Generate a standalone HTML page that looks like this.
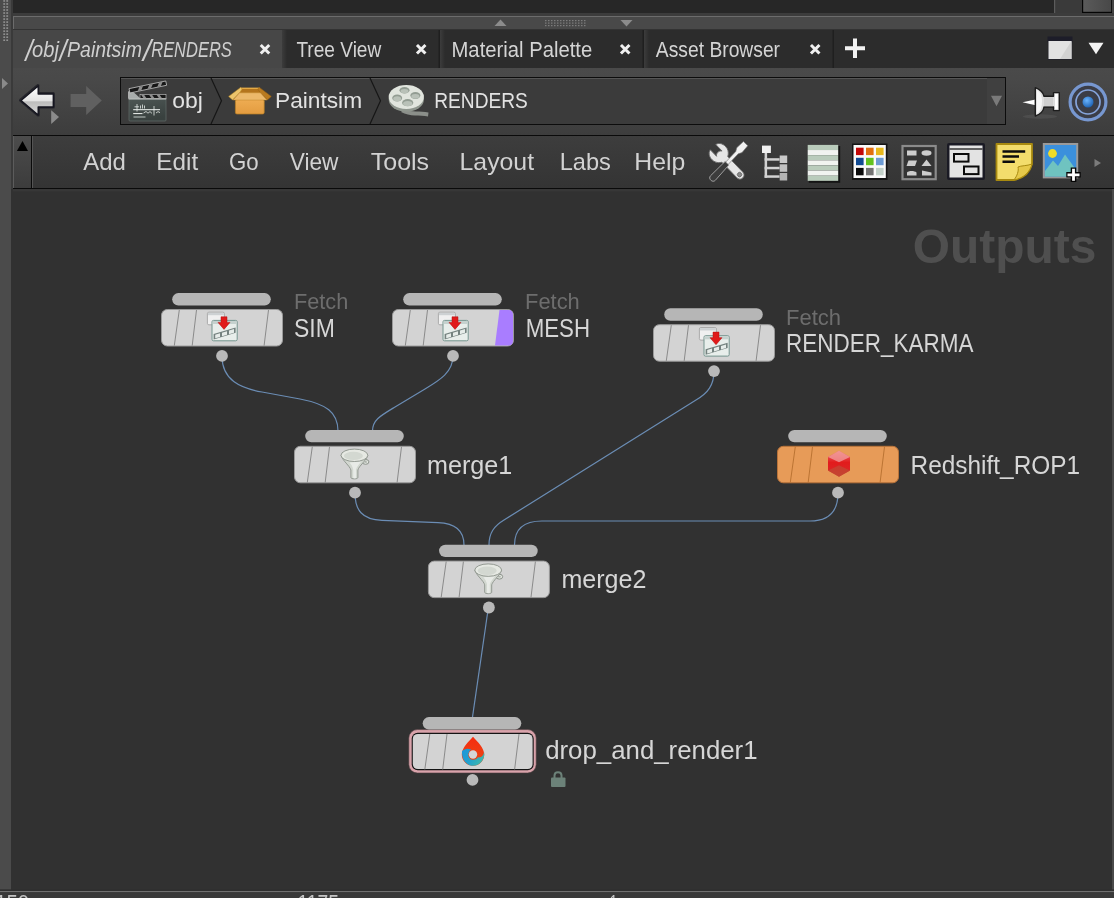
<!DOCTYPE html>
<html lang="en"><head><meta charset="utf-8"><title>Houdini Network Editor</title>
<style>
html,body{margin:0;padding:0;background:#333;}
body{width:1114px;height:898px;overflow:hidden;font-family:"Liberation Sans",sans-serif;}
svg{display:block;will-change:transform}
text{font-family:"Liberation Sans",sans-serif;}
</style></head><body>
<svg width="1114" height="898" viewBox="0 0 1114 898">
<defs>
<linearGradient id="menuG" x1="0" y1="0" x2="0" y2="1"><stop offset="0" stop-color="#3d3d3d"/><stop offset="1" stop-color="#343434"/></linearGradient>
<linearGradient id="arrG" x1="0" y1="0" x2="0" y2="1"><stop offset="0" stop-color="#ffffff"/><stop offset="0.5" stop-color="#e4e4e4"/><stop offset="0.55" stop-color="#bdbdbd"/><stop offset="1" stop-color="#d8d8d8"/></linearGradient>
<linearGradient id="tabEdge" x1="0" y1="0" x2="1" y2="0"><stop offset="0" stop-color="#3c3c3c"/><stop offset="1" stop-color="#2c2c2c"/></linearGradient>
<linearGradient id="boxG" x1="0" y1="0" x2="0" y2="1"><stop offset="0" stop-color="#eeac52"/><stop offset="1" stop-color="#e39c40"/></linearGradient>
<linearGradient id="rsG" x1="0" y1="0" x2="0" y2="1"><stop offset="0" stop-color="#ee7070"/><stop offset="0.45" stop-color="#e21c1c"/><stop offset="0.7" stop-color="#de2222"/><stop offset="1" stop-color="#c93a2a"/></linearGradient>
<linearGradient id="redG" x1="0" y1="0" x2="0" y2="1"><stop offset="0" stop-color="#f62c10"/><stop offset="1" stop-color="#e84a14"/></linearGradient>
<linearGradient id="blueG" x1="0" y1="0" x2="1" y2="0.4"><stop offset="0" stop-color="#1b96da"/><stop offset="0.55" stop-color="#24a2cc"/><stop offset="1" stop-color="#3db6ae"/></linearGradient>
<linearGradient id="clapG" x1="0" y1="0" x2="0.3" y2="1"><stop offset="0" stop-color="#4d5654"/><stop offset="1" stop-color="#39413f"/></linearGradient>
<linearGradient id="rowG" x1="0" y1="0" x2="0" y2="1"><stop offset="0" stop-color="#4a4a4a"/><stop offset="0.15" stop-color="#494949"/><stop offset="1" stop-color="#3d3d3d"/></linearGradient>
<linearGradient id="tbx" x1="0" y1="0" x2="1" y2="0"><stop offset="0" stop-color="#5a5a5a"/><stop offset="1" stop-color="#484848"/></linearGradient>
<linearGradient id="btnG" x1="0" y1="0" x2="0" y2="1"><stop offset="0" stop-color="#4c4c4c"/><stop offset="1" stop-color="#3c3c3c"/></linearGradient>
<filter id="soft" x="-20%" y="-20%" width="140%" height="140%"><feGaussianBlur stdDeviation="0.75"/></filter>
<radialGradient id="blueBall" cx="0.4" cy="0.35" r="0.7"><stop offset="0" stop-color="#6ab4ff"/><stop offset="1" stop-color="#1c5fb0"/></radialGradient>
</defs>

<rect x="0" y="0" width="1114" height="898" fill="#474747"/>
<rect x="13" y="0" width="1041" height="13" fill="#272727"/>
<rect x="13" y="13" width="1101" height="3" fill="#3c3c3c"/>
<rect x="1054" y="0" width="60" height="13" fill="#3a3a3a"/>
<rect x="1054" y="0" width="1.2" height="13" fill="#5c5c5c"/>
<rect x="1082" y="0" width="30" height="13" fill="#050505"/>
<rect x="1083.2" y="0" width="28" height="11.8" fill="url(#tbx)"/>
<rect x="1112" y="0" width="2" height="13" fill="#444"/>
<rect x="13" y="16" width="1101" height="1" fill="#6c6c6c"/>
<rect x="13" y="17" width="1" height="12" fill="#6c6c6c"/>
<rect x="14" y="17" width="1100" height="12" fill="#494949"/>
<rect x="13" y="29" width="1101" height="1" fill="#333"/>
<rect x="0" y="0" width="11" height="889" fill="#4b4b4b"/>
<rect x="11" y="0" width="2" height="889" fill="#3a3a3a"/>
<rect x="3.3" y="0.20" width="1.8" height="1.5" fill="#969696"/>
<rect x="6.3" y="0.20" width="1.8" height="1.5" fill="#969696"/>
<rect x="3.3" y="3.22" width="1.8" height="1.5" fill="#969696"/>
<rect x="6.3" y="3.22" width="1.8" height="1.5" fill="#969696"/>
<rect x="3.3" y="6.24" width="1.8" height="1.5" fill="#969696"/>
<rect x="6.3" y="6.24" width="1.8" height="1.5" fill="#969696"/>
<rect x="3.3" y="9.26" width="1.8" height="1.5" fill="#969696"/>
<rect x="6.3" y="9.26" width="1.8" height="1.5" fill="#969696"/>
<rect x="3.3" y="12.28" width="1.8" height="1.5" fill="#969696"/>
<rect x="6.3" y="12.28" width="1.8" height="1.5" fill="#969696"/>
<rect x="3.3" y="15.30" width="1.8" height="1.5" fill="#969696"/>
<rect x="6.3" y="15.30" width="1.8" height="1.5" fill="#969696"/>
<rect x="3.3" y="18.32" width="1.8" height="1.5" fill="#969696"/>
<rect x="6.3" y="18.32" width="1.8" height="1.5" fill="#969696"/>
<rect x="3.3" y="21.34" width="1.8" height="1.5" fill="#969696"/>
<rect x="6.3" y="21.34" width="1.8" height="1.5" fill="#969696"/>
<rect x="3.3" y="24.36" width="1.8" height="1.5" fill="#969696"/>
<rect x="6.3" y="24.36" width="1.8" height="1.5" fill="#969696"/>
<rect x="3.3" y="27.38" width="1.8" height="1.5" fill="#969696"/>
<rect x="6.3" y="27.38" width="1.8" height="1.5" fill="#969696"/>
<rect x="3.3" y="30.40" width="1.8" height="1.5" fill="#969696"/>
<rect x="6.3" y="30.40" width="1.8" height="1.5" fill="#969696"/>
<rect x="3.3" y="33.42" width="1.8" height="1.5" fill="#969696"/>
<rect x="6.3" y="33.42" width="1.8" height="1.5" fill="#969696"/>
<rect x="3.3" y="36.44" width="1.8" height="1.5" fill="#969696"/>
<rect x="6.3" y="36.44" width="1.8" height="1.5" fill="#969696"/>
<rect x="3.3" y="39.46" width="1.8" height="1.5" fill="#969696"/>
<rect x="6.3" y="39.46" width="1.8" height="1.5" fill="#969696"/>
<path d="M2 78 L8 83.5 L2 89 Z" fill="#8a8a8a"/>
<rect x="282" y="30" width="832" height="38" fill="#2c2c2c"/>
<rect x="282" y="30" width="5" height="38" fill="url(#tabEdge)"/>
<rect x="440" y="30" width="5" height="38" fill="url(#tabEdge)"/>
<rect x="644" y="30" width="5" height="38" fill="url(#tabEdge)"/>
<rect x="438.5" y="30" width="1.5" height="38" fill="#1f1f1f"/>
<rect x="642.5" y="30" width="1.5" height="38" fill="#1f1f1f"/>
<rect x="832.5" y="30" width="1.5" height="38" fill="#1f1f1f"/>
<path d="M494.5 26 L500.5 19.5 L506.5 26 Z" fill="#8c8c8c"/>
<path d="M620.5 20 L632.5 20 L626.5 26.5 Z" fill="#8c8c8c"/>
<rect x="545" y="20" width="1.5" height="1.2" fill="#7d7d7d"/>
<rect x="545" y="22.5" width="1.5" height="1.2" fill="#7d7d7d"/>
<rect x="545" y="25" width="1.5" height="1.2" fill="#7d7d7d"/>
<rect x="548" y="20" width="1.5" height="1.2" fill="#7d7d7d"/>
<rect x="548" y="22.5" width="1.5" height="1.2" fill="#7d7d7d"/>
<rect x="548" y="25" width="1.5" height="1.2" fill="#7d7d7d"/>
<rect x="551" y="20" width="1.5" height="1.2" fill="#7d7d7d"/>
<rect x="551" y="22.5" width="1.5" height="1.2" fill="#7d7d7d"/>
<rect x="551" y="25" width="1.5" height="1.2" fill="#7d7d7d"/>
<rect x="554" y="20" width="1.5" height="1.2" fill="#7d7d7d"/>
<rect x="554" y="22.5" width="1.5" height="1.2" fill="#7d7d7d"/>
<rect x="554" y="25" width="1.5" height="1.2" fill="#7d7d7d"/>
<rect x="557" y="20" width="1.5" height="1.2" fill="#7d7d7d"/>
<rect x="557" y="22.5" width="1.5" height="1.2" fill="#7d7d7d"/>
<rect x="557" y="25" width="1.5" height="1.2" fill="#7d7d7d"/>
<rect x="560" y="20" width="1.5" height="1.2" fill="#7d7d7d"/>
<rect x="560" y="22.5" width="1.5" height="1.2" fill="#7d7d7d"/>
<rect x="560" y="25" width="1.5" height="1.2" fill="#7d7d7d"/>
<rect x="563" y="20" width="1.5" height="1.2" fill="#7d7d7d"/>
<rect x="563" y="22.5" width="1.5" height="1.2" fill="#7d7d7d"/>
<rect x="563" y="25" width="1.5" height="1.2" fill="#7d7d7d"/>
<rect x="566" y="20" width="1.5" height="1.2" fill="#7d7d7d"/>
<rect x="566" y="22.5" width="1.5" height="1.2" fill="#7d7d7d"/>
<rect x="566" y="25" width="1.5" height="1.2" fill="#7d7d7d"/>
<rect x="569" y="20" width="1.5" height="1.2" fill="#7d7d7d"/>
<rect x="569" y="22.5" width="1.5" height="1.2" fill="#7d7d7d"/>
<rect x="569" y="25" width="1.5" height="1.2" fill="#7d7d7d"/>
<rect x="572" y="20" width="1.5" height="1.2" fill="#7d7d7d"/>
<rect x="572" y="22.5" width="1.5" height="1.2" fill="#7d7d7d"/>
<rect x="572" y="25" width="1.5" height="1.2" fill="#7d7d7d"/>
<rect x="575" y="20" width="1.5" height="1.2" fill="#7d7d7d"/>
<rect x="575" y="22.5" width="1.5" height="1.2" fill="#7d7d7d"/>
<rect x="575" y="25" width="1.5" height="1.2" fill="#7d7d7d"/>
<rect x="578" y="20" width="1.5" height="1.2" fill="#7d7d7d"/>
<rect x="578" y="22.5" width="1.5" height="1.2" fill="#7d7d7d"/>
<rect x="578" y="25" width="1.5" height="1.2" fill="#7d7d7d"/>
<rect x="581" y="20" width="1.5" height="1.2" fill="#7d7d7d"/>
<rect x="581" y="22.5" width="1.5" height="1.2" fill="#7d7d7d"/>
<rect x="581" y="25" width="1.5" height="1.2" fill="#7d7d7d"/>
<rect x="584" y="20" width="1.5" height="1.2" fill="#7d7d7d"/>
<rect x="584" y="22.5" width="1.5" height="1.2" fill="#7d7d7d"/>
<rect x="584" y="25" width="1.5" height="1.2" fill="#7d7d7d"/>
<text transform="translate(25.46,61) scale(1,1.3)" x="0" y="0" font-size="22.5" fill="#cfcfcf" font-style="italic" textLength="7.24" lengthAdjust="spacingAndGlyphs">/</text>
<text transform="translate(59.46,61) scale(1,1.3)" x="0" y="0" font-size="22.5" fill="#cfcfcf" font-style="italic" textLength="7.24" lengthAdjust="spacingAndGlyphs">/</text>
<text transform="translate(142.92,61) scale(1,1.3)" x="0" y="0" font-size="22.5" fill="#cfcfcf" font-style="italic" textLength="8.09" lengthAdjust="spacingAndGlyphs">/</text>
<text x="32.06" y="56.6" font-size="22.5" fill="#cfcfcf" textLength="26.89" lengthAdjust="spacingAndGlyphs" font-style="italic" >obj</text>
<text x="67.1" y="56.6" font-size="22.5" fill="#cfcfcf" textLength="74.78" lengthAdjust="spacingAndGlyphs" font-style="italic" >Paintsim</text>
<text x="151.24" y="56.6" font-size="22.5" fill="#cfcfcf" textLength="80.57" lengthAdjust="spacingAndGlyphs" font-style="italic" >RENDERS</text>
<path d="M260.75 44.95 L269.25 53.45 M269.25 44.95 L260.75 53.45" stroke="#f0f0f0" stroke-width="3" fill="none"/>
<text x="296.4" y="56.7" font-size="22.5" fill="#d4d4d4" textLength="84.89" lengthAdjust="spacingAndGlyphs" >Tree View</text>
<path d="M416.95 44.95 L425.45 53.45 M425.45 44.95 L416.95 53.45" stroke="#f0f0f0" stroke-width="3" fill="none"/>
<text x="451.5" y="56.7" font-size="22.5" fill="#d4d4d4" textLength="140.67" lengthAdjust="spacingAndGlyphs" >Material Palette</text>
<path d="M620.95 44.95 L629.45 53.45 M629.45 44.95 L620.95 53.45" stroke="#f0f0f0" stroke-width="3" fill="none"/>
<text x="655.86" y="56.7" font-size="22.5" fill="#d4d4d4" textLength="124.18" lengthAdjust="spacingAndGlyphs" >Asset Browser</text>
<path d="M810.95 44.95 L819.45 53.45 M819.45 44.95 L810.95 53.45" stroke="#f0f0f0" stroke-width="3" fill="none"/>
<path d="M855 38.5 V58 M845 48.2 H865" stroke="#f2f2f2" stroke-width="4" fill="none"/>
<rect x="1047.5" y="36.5" width="25" height="6" fill="#1d1d29"/>
<rect x="1047.8" y="41" width="24.4" height="18.8" fill="#24242c"/>
<rect x="1048.5" y="41" width="23" height="18" fill="#e2e2e2"/>
<path d="M1060 59 L1071.5 41 L1071.5 59 Z" fill="#d2d2d2"/>
<path d="M1088.5 42.8 L1103.5 42.8 L1096 54.2 Z" fill="#f4f4f4"/>
<rect x="13" y="68" width="1101" height="67" fill="url(#rowG)"/>
<rect x="120.5" y="77.5" width="885" height="47" fill="#3b3b3b" stroke="#0c0c0c" stroke-width="1"/>
<rect x="121" y="78" width="884" height="1" fill="#555555"/>
<rect x="987" y="78" width="18" height="46" fill="#404040"/>
<path d="M991 95.7 L1002 95.7 L996.5 106.3 Z" fill="#7a7a7a"/>
<path d="M211 78 L221.5 100.7 L211 124" stroke="#161616" stroke-width="1.2" fill="none"/>
<path d="M370 78 L380.5 100.7 L370 124" stroke="#161616" stroke-width="1.2" fill="none"/>
<text x="172.32" y="107.6" font-size="22.5" fill="#e2e2e2" textLength="30.6" lengthAdjust="spacingAndGlyphs" >obj</text>
<text x="275.0" y="107.6" font-size="22.5" fill="#e2e2e2" textLength="87.09" lengthAdjust="spacingAndGlyphs" >Paintsim</text>
<text x="434.24" y="107.6" font-size="22.5" fill="#e2e2e2" textLength="93.63" lengthAdjust="spacingAndGlyphs" >RENDERS</text>
<path d="M20.6 100.2 L37.8 85.6 L37.8 93.6 L53.3 93.6 L53.3 107 L38.2 107 L38.2 115 Z" fill="#1a1a22" stroke="#1a1a22" stroke-width="3.2" stroke-linejoin="round" opacity="0.75" filter="url(#soft)"/>
<path d="M21 100.5 L38.2 86 L38.2 94 L53.3 94 L53.3 107 L38.2 107 L38.2 115 Z" fill="url(#arrG)" stroke="#15151f" stroke-width="1.4" stroke-linejoin="round"/>
<path d="M51.2 110.2 L59 117 L51.2 124 Z" fill="#8c8c8c"/>
<path d="M101.8 100.5 L86.2 86 L86.2 94 L70.6 94 L70.6 107 L86.2 107 L86.2 115 Z" fill="#606060"/>
<rect x="13" y="135" width="1101" height="54" fill="#0a0a0a"/>
<rect x="13" y="136" width="18" height="52" fill="url(#btnG)"/>
<rect x="13" y="136" width="1" height="52" fill="#5c5c5c"/>
<rect x="32" y="136" width="1082" height="52" fill="url(#menuG)"/>
<rect x="32" y="136" width="1" height="52" fill="#545454"/>
<path d="M16.9 151 L22.5 141 L28 151 Z" fill="#000"/>
<text x="83.23" y="169.5" font-size="24" fill="#d2d2d2" textLength="42.61" lengthAdjust="spacingAndGlyphs" >Add</text>
<text x="156.32" y="169.5" font-size="24" fill="#d2d2d2" textLength="41.83" lengthAdjust="spacingAndGlyphs" >Edit</text>
<text x="229.0" y="169.5" font-size="24" fill="#d2d2d2" textLength="29.63" lengthAdjust="spacingAndGlyphs" >Go</text>
<text x="289.81" y="169.5" font-size="24" fill="#d2d2d2" textLength="48.67" lengthAdjust="spacingAndGlyphs" >View</text>
<text x="370.74" y="169.5" font-size="24" fill="#d2d2d2" textLength="58.35" lengthAdjust="spacingAndGlyphs" >Tools</text>
<text x="459.5" y="169.5" font-size="24" fill="#d2d2d2" textLength="74.58" lengthAdjust="spacingAndGlyphs" >Layout</text>
<text x="559.74" y="169.5" font-size="24" fill="#d2d2d2" textLength="51.17" lengthAdjust="spacingAndGlyphs" >Labs</text>
<text x="634.31" y="169.5" font-size="24" fill="#d2d2d2" textLength="51.02" lengthAdjust="spacingAndGlyphs" >Help</text>
<g>
<rect x="129" y="99" width="37" height="22" rx="1" fill="url(#clapG)" stroke="#5e6866" stroke-width="0.8"/>
<rect x="128.5" y="98.2" width="37.8" height="1.2" fill="#d9dcdb"/>
<rect x="140" y="94.6" width="26" height="3.8" fill="#161616" stroke="#c9c9c9" stroke-width="0.6"/>
<path d="M146.5 98.2 L144.1 94.8 L141.1 94.8 L143.5 98.2 Z" fill="#8e8e8e"/>
<path d="M154.5 98.2 L152.1 94.8 L149.1 94.8 L151.5 98.2 Z" fill="#8e8e8e"/>
<path d="M162 98.2 L159.6 94.8 L156.6 94.8 L159 98.2 Z" fill="#8e8e8e"/>
<path d="M128.6 98.4 L128.6 91.4 L132 90.8 L140.5 98.4 Z" fill="#a9adac"/>
<path d="M128.6 98.4 L128.6 91.4" stroke="#d8d8d8" stroke-width="0.7" fill="none"/>
<g transform="rotate(-11.8 128.5 91)">
<rect x="129.5" y="88.8" width="37.5" height="4.4" fill="#161616" stroke="#cfcfcf" stroke-width="0.7"/>
<path d="M137.5 93 L140.1 89 L143.7 89 L141.1 93 Z" fill="#8e8e8e"/>
<path d="M147.5 93 L150.1 89 L153.7 89 L151.1 93 Z" fill="#8e8e8e"/>
<path d="M157.5 93 L160.1 89 L163.7 89 L161.1 93 Z" fill="#8e8e8e"/>
</g>
<path d="M133.2 109.7 H160 M133.2 113.6 H142.5" stroke="#f0f4f2" stroke-width="1" fill="none"/>
<path d="M133.5 117 H145.5" stroke="#aab2af" stroke-width="1.2" fill="none"/>
<path d="M137 104 V111.5 M134.5 106.8 H139 M140.5 105.5 V108.5 M142.5 104.5 V108.5 M144.5 105.5 V108.5 M154 106 V115.5 M143.5 113 L146 111.5 L148 113.2 L150 111.6 L152 113.4 M156 113 L158 111.6 L160 112.6" stroke="#e6ebe9" stroke-width="0.8" fill="none"/>
</g>
<g>
<path d="M240.5 88 L259.4 88 L260.6 93 L239.3 93 Z" fill="#b4751d"/>
<path d="M240 87.6 L259.8 87.6 L259.8 89 L240 89 Z" fill="#e2a945"/>
<path d="M240.6 87.4 L228.6 96.4 L232.6 99.9 L239.5 92.9 L242.2 89 Z" fill="#ecc46c" stroke="#b8861e" stroke-width="0.5"/>
<path d="M259.4 87.4 L271.3 96.4 L267.4 99.9 L260.4 92.9 L257.8 89 Z" fill="#b87a20" stroke="#96600f" stroke-width="0.5"/>
<rect x="235.4" y="99.6" width="28.8" height="14.4" rx="1.6" fill="url(#boxG)" stroke="#b97f22" stroke-width="0.7"/>
<path d="M239.5 92.8 L260.4 92.8 L267 100 L233 100 Z" fill="#ecb96b" stroke="#c58d30" stroke-width="0.5" stroke-linejoin="round"/>
</g>
<g>
<path d="M404 109 C412 113 420 110.5 428.5 112.5 L428 116.5 C420 115 410 117 401 112 Z" fill="#8b8f8a"/>
<ellipse cx="406.3" cy="99.8" rx="17.6" ry="11.9" fill="#8f968e"/>
<ellipse cx="406.3" cy="97" rx="17.6" ry="11.9" fill="#e1e5de"/>
<ellipse cx="404.5" cy="90.3" rx="5" ry="3.2" fill="#929c92"/>
<ellipse cx="404.5" cy="91.1" rx="4" ry="2.2" fill="#b9c1b8"/>
<ellipse cx="397.2" cy="98" rx="5" ry="3.5" fill="#929c92"/>
<ellipse cx="397.2" cy="98.8" rx="4" ry="2.5" fill="#b9c1b8"/>
<ellipse cx="415.4" cy="95.5" rx="5" ry="3.4" fill="#929c92"/>
<ellipse cx="415.4" cy="96.3" rx="4" ry="2.4" fill="#b9c1b8"/>
<ellipse cx="407.7" cy="102.7" rx="5.6" ry="3.6" fill="#929c92"/>
<ellipse cx="407.7" cy="103.5" rx="4.6" ry="2.6" fill="#b9c1b8"/>
</g>
<g>
<ellipse cx="1040" cy="116.5" rx="17" ry="2.2" fill="#555" opacity="0.6"/>
<path d="M1022.5 102.3 L1035.5 99.4 L1035.5 105.3 Z" fill="#ffffff"/>
<path d="M1035.3 87.7 C1041 90 1043.5 94 1044 96.3 L1053.5 96.3 L1053.5 92.6 L1059.3 92.6 L1059.3 110.6 L1053.5 110.6 L1053.5 107 L1044 107 C1043.5 110.5 1041 114 1035.3 116 Z" fill="#dedede" stroke="#1d1d1d" stroke-width="1.4" stroke-linejoin="round"/>
<path d="M1037 90 C1040.5 92.5 1042 96 1042 101.5 C1042 107 1040.5 111 1037 114 Z" fill="#f6f6f6"/>
<rect x="1044" y="97.2" width="9" height="9" fill="#cfcfcf"/>
<rect x="1055" y="94" width="2.8" height="15" fill="#ffffff"/>
</g>
<g>
<g filter="url(#soft)">
<circle cx="1088" cy="102" r="19" fill="#3b3e47"/>
<circle cx="1088" cy="102" r="17.9" fill="none" stroke="#7797d0" stroke-width="3.2"/>
<circle cx="1088" cy="102" r="12" fill="none" stroke="#86a4dc" stroke-width="1.7"/>
<circle cx="1088" cy="102" r="5.5" fill="url(#blueBall)"/>
</g>
</g>
<g>
<g transform="translate(718.3,152.6) rotate(46)">
<path d="M1.5 -3.8 L-7.6 -3.8 C-6.8 -8 -2 -10.3 3 -9.2 C6.4 -8.4 8.4 -6 9.4 -4.1 L31 -4.1 C36.6 -4.1 36.6 4.1 31 4.1 L9.4 4.1 C8.4 6 6.4 8.4 3 9.2 C-2 10.3 -6.8 8 -7.6 3.8 L1.5 3.8 C-1.2 2.4 -1.2 -2.4 1.5 -3.8 Z" fill="#e6e6e6" stroke="#6a6a6a" stroke-width="0.9" stroke-linejoin="round"/>
<circle cx="30.6" cy="0" r="2.2" fill="#8a8a8a" stroke="#5a5a5a" stroke-width="0.7"/>
</g>
<g transform="translate(745.6,143.6) rotate(133.5)">
<path d="M0 -3 L9 -3.6 L12.5 -1.7 L29 -1.7 L29 1.7 L12.5 1.7 L9 3.6 L0 3 Z" fill="#f1f1f1" stroke="#777" stroke-width="0.6" stroke-linejoin="round"/>
<path d="M27 -2.6 L47.5 -3.3 C51.5 -3.3 51.5 3.3 47.5 3.3 L27 2.6 Z" fill="#3c3c3c" stroke="#a2a2a2" stroke-width="0.9" stroke-linejoin="round"/>
</g>
</g>
<g>
<rect x="762" y="145.6" width="8.9" height="7.4" fill="#f0f0f0"/>
<rect x="764.6" y="153" width="2.5" height="24.8" fill="#d2d2d2"/>
<rect x="764.6" y="158.2" width="15" height="2.5" fill="#d2d2d2"/>
<rect x="764.6" y="166.8" width="15" height="2.5" fill="#d2d2d2"/>
<rect x="764.6" y="175.3" width="15" height="2.5" fill="#d2d2d2"/>
<rect x="779.7" y="155.5" width="7.5" height="7.5" fill="#cacaca"/>
<rect x="779.7" y="164.3" width="7.5" height="7.5" fill="#c2c2c2"/>
<rect x="779.7" y="173" width="7.5" height="7.5" fill="#b4b4b4"/>
</g>
<g>
<rect x="808.8" y="146" width="31.4" height="36.8" fill="#141414"/>
<rect x="807.7" y="144.90" width="30.5" height="5.18" fill="#b9cbbb"/>
<rect x="807.7" y="150.03" width="30.5" height="5.18" fill="#f1f3f0"/>
<rect x="807.7" y="155.16" width="30.5" height="5.18" fill="#b9cbbb"/>
<rect x="807.7" y="160.29" width="30.5" height="5.18" fill="#f1f3f0"/>
<rect x="807.7" y="165.41" width="30.5" height="5.18" fill="#b9cbbb"/>
<rect x="807.7" y="170.54" width="30.5" height="5.18" fill="#f1f3f0"/>
<rect x="807.7" y="175.67" width="30.5" height="5.18" fill="#b9cbbb"/>
</g>
<g>
<rect x="852" y="143.5" width="35.5" height="36.5" fill="#141414"/>
<rect x="853.5" y="145" width="32.3" height="33" fill="#fafafa"/>
<rect x="856.0" y="147.7" width="7.6" height="7.4" fill="#c30808"/>
<rect x="866.0" y="147.7" width="7.6" height="7.4" fill="#e2700f"/>
<rect x="876.0" y="147.7" width="7.6" height="7.4" fill="#e8b81c"/>
<rect x="856.0" y="157.8" width="7.6" height="7.4" fill="#114a92"/>
<rect x="866.0" y="157.8" width="7.6" height="7.4" fill="#62c21e"/>
<rect x="876.0" y="157.8" width="7.6" height="7.4" fill="#6c9bd4"/>
<rect x="856.0" y="167.9" width="7.6" height="7.4" fill="#0a0a0a"/>
<rect x="866.0" y="167.9" width="7.6" height="7.4" fill="#727272"/>
<rect x="876.0" y="167.9" width="7.6" height="7.4" fill="#c3d1c9"/>
</g>
<g>
<rect x="902.5" y="146" width="33.2" height="33.2" fill="#343434" stroke="#8b8b8b" stroke-width="2.2"/>
<rect x="907" y="150.5" width="9.5" height="5" fill="#cdcdcd"/>
<ellipse cx="926.5" cy="153" rx="5" ry="2.7" fill="#cdcdcd"/>
<path d="M908.5 160.5 L917 160.5 L915 166 L906.5 166 Z" fill="#cdcdcd"/>
<path d="M926.5 159.5 L931.5 166 L921.5 166 Z" fill="#cdcdcd"/>
<path d="M907 175.5 L907 172.5 C908.5 170.5 914.5 170.5 916.5 172.5 L916.5 175.5 Z" fill="#cdcdcd"/>
<path d="M922 170.5 L931.5 172.5 L931.5 175.5 L922 175.5 Z" fill="#cdcdcd"/>
</g>
<g>
<rect x="947" y="143" width="38" height="37" rx="2" fill="#1a1a24"/>
<rect x="949.5" y="145.5" width="33" height="32" fill="#e3e3e3"/>
<rect x="949.5" y="148.3" width="33" height="1.4" fill="#2a2a2a"/>
<rect x="954" y="154" width="14.5" height="7.6" fill="#e3e3e3" stroke="#0a0a0a" stroke-width="2"/>
<rect x="964" y="166.5" width="14.5" height="7.6" fill="#e3e3e3" stroke="#0a0a0a" stroke-width="2"/>
</g>
<g>
<path d="M996.5 144 L1032 144 L1032 164 C1030 172 1024 178 1014 180 L996.5 180 Z" fill="#f3dd6c" stroke="#a88a10" stroke-width="1.8" stroke-linejoin="round"/>
<path d="M1032 164 C1027 166 1021 165.5 1018 167 C1019 171 1017 176 1014 180 C1024 178 1030 172 1032 164 Z" fill="#e6c94a" stroke="#a88a10" stroke-width="1"/>
<path d="M1002.5 151.6 H1025.2 M1002.5 156.6 H1019 M1002.5 161.7 H1014.8" stroke="#0c0c0c" stroke-width="2.5" fill="none"/>
</g>
<g>
<rect x="1043.8" y="144" width="33.4" height="33.4" fill="#3b90dc" stroke="#9a9a9a" stroke-width="2"/>
<circle cx="1052.5" cy="153.5" r="4.4" fill="#f0dc28"/>
<path d="M1045 176.5 L1045 171 L1053 160.5 L1058 166 L1065 154.5 L1076.2 170 L1076.2 176.5 Z" fill="#6fc3c0"/>
<path d="M1073.5 167.5 V182 M1066.3 174.8 H1080.7" stroke="#050505" stroke-width="5.6" fill="none"/>
<path d="M1073.5 168.8 V180.8 M1067.5 174.8 H1079.5" stroke="#ffffff" stroke-width="2.8" fill="none"/>
</g>
<path d="M1094.5 159 L1101 163 L1094.5 167 Z" fill="#7c7c7c"/>
<rect x="11" y="189" width="1101" height="702" fill="#313131"/>
<rect x="13" y="189" width="1099" height="2.5" fill="#373737"/>
<rect x="1112" y="189" width="2" height="702" fill="#4a4a4a"/>
<rect x="0" y="889.4" width="1114" height="1.6" fill="#2f2f2f"/>
<rect x="0" y="891" width="1114" height="1.2" fill="#707070"/>
<rect x="0" y="892.2" width="1114" height="6" fill="#393939"/>
<text x="-4.8" y="910.2" font-size="22.5" fill="#c4c4c4" textLength="34" lengthAdjust="spacingAndGlyphs" >150</text>
<text x="297.5" y="910.2" font-size="22.5" fill="#c4c4c4" textLength="41.5" lengthAdjust="spacingAndGlyphs" >1175</text>
<text x="609.5" y="910.2" font-size="22.5" fill="#c4c4c4" textLength="8" lengthAdjust="spacingAndGlyphs" >1</text>
<text x="912.85" y="263" font-size="48" fill="#4f4f4f" textLength="183.45" lengthAdjust="spacingAndGlyphs" font-weight="bold" >Outputs</text>
<path d="M222 356 C222 380 240 388 262 392 L300 399 C326 404 338 412 338 431" stroke="#6b8db5" stroke-width="1.2" fill="none"/>
<path d="M453 356 C453 372 440 380 425 389 L395 407 C380 416 372.5 420 372.5 431" stroke="#6b8db5" stroke-width="1.2" fill="none"/>
<path d="M714 371 C714 385 708 393 696 400 L504 520 C494 526 489 533 489 545" stroke="#6b8db5" stroke-width="1.2" fill="none"/>
<path d="M355 493 C355 510 362 519.6 382 520.4 L438 522.6 C456 523.2 464 531 464 545" stroke="#6b8db5" stroke-width="1.2" fill="none"/>
<path d="M838 493 C838 510 830 521 810 521 L542 521 C522 521 514.5 530 514.5 545" stroke="#6b8db5" stroke-width="1.2" fill="none"/>
<path d="M488.3 608 L472.5 717" stroke="#6b8db5" stroke-width="1.2" fill="none"/>
<rect x="172.2" y="293.1" width="98.6" height="12.4" rx="6.2" fill="#b6b6b6"/>
<rect x="161.5" y="309.5" width="121" height="36.5" rx="5.8" fill="#d3d3d3" stroke="#9a9a9a" stroke-width="1"/>
<path d="M179.3 310 L174.3 345.6" stroke="#777" stroke-width="0.8" fill="none"/>
<path d="M196.5 310 L192.2 345.6" stroke="#777" stroke-width="0.8" fill="none"/>
<path d="M268.5 310 L264.1 345.6" stroke="#777" stroke-width="0.8" fill="none"/>
<circle cx="222" cy="355.9" r="5.9" fill="#b9b9b9"/>
<rect x="403.2" y="293.1" width="98.6" height="12.4" rx="6.2" fill="#b6b6b6"/>
<rect x="392.5" y="309.5" width="121" height="36.5" rx="5.8" fill="#d3d3d3" stroke="#9a9a9a" stroke-width="1"/>
<path d="M499.5 310 L508.5 310 Q513 310 513 315 L513 340.5 Q513 345.5 508.5 345.5 L495 345.5 Z" fill="#a97dff"/>
<path d="M410.3 310 L405.3 345.6" stroke="#777" stroke-width="0.8" fill="none"/>
<path d="M427.5 310 L423.2 345.6" stroke="#777" stroke-width="0.8" fill="none"/>
<circle cx="453" cy="355.9" r="5.9" fill="#b9b9b9"/>
<rect x="664.2" y="308.3" width="98.6" height="12.4" rx="6.2" fill="#b6b6b6"/>
<rect x="653.5" y="324.7" width="121" height="36.5" rx="5.8" fill="#d3d3d3" stroke="#9a9a9a" stroke-width="1"/>
<path d="M671.3 325.2 L666.3 360.8" stroke="#777" stroke-width="0.8" fill="none"/>
<path d="M688.5 325.2 L684.2 360.8" stroke="#777" stroke-width="0.8" fill="none"/>
<path d="M760.5 325.2 L756.1 360.8" stroke="#777" stroke-width="0.8" fill="none"/>
<circle cx="714" cy="371.09999999999997" r="5.9" fill="#b9b9b9"/>
<rect x="305.2" y="429.90000000000003" width="98.6" height="12.4" rx="6.2" fill="#b6b6b6"/>
<rect x="294.5" y="446.3" width="121" height="36.5" rx="5.8" fill="#d3d3d3" stroke="#9a9a9a" stroke-width="1"/>
<path d="M312.3 446.8 L307.3 482.40000000000003" stroke="#777" stroke-width="0.8" fill="none"/>
<path d="M329.5 446.8 L325.2 482.40000000000003" stroke="#777" stroke-width="0.8" fill="none"/>
<path d="M401.5 446.8 L397.1 482.40000000000003" stroke="#777" stroke-width="0.8" fill="none"/>
<circle cx="355" cy="492.7" r="5.9" fill="#b9b9b9"/>
<rect x="788.2" y="429.90000000000003" width="98.6" height="12.4" rx="6.2" fill="#b6b6b6"/>
<rect x="777.5" y="446.3" width="121" height="36.5" rx="5.8" fill="#e79b58" stroke="#b9733a" stroke-width="1"/>
<path d="M795.3 446.8 L790.3 482.40000000000003" stroke="#b06a2a" stroke-width="0.8" fill="none"/>
<path d="M812.5 446.8 L808.2 482.40000000000003" stroke="#b06a2a" stroke-width="0.8" fill="none"/>
<path d="M884.5 446.8 L880.1 482.40000000000003" stroke="#b06a2a" stroke-width="0.8" fill="none"/>
<circle cx="838" cy="492.7" r="5.9" fill="#b9b9b9"/>
<rect x="439.09999999999997" y="544.7" width="98.6" height="12.4" rx="6.2" fill="#b6b6b6"/>
<rect x="428.4" y="561.1" width="121" height="36.5" rx="5.8" fill="#d3d3d3" stroke="#9a9a9a" stroke-width="1"/>
<path d="M446.2 561.6 L441.2 597.2" stroke="#777" stroke-width="0.8" fill="none"/>
<path d="M463.4 561.6 L459.09999999999997 597.2" stroke="#777" stroke-width="0.8" fill="none"/>
<path d="M535.4 561.6 L531.0 597.2" stroke="#777" stroke-width="0.8" fill="none"/>
<circle cx="488.9" cy="607.5" r="5.9" fill="#b9b9b9"/>
<rect x="408.8" y="729.6" width="127.4" height="43.4" rx="8.5" fill="#d9a3ab" stroke="#4a3a3c" stroke-width="0.6"/>
<rect x="411.7" y="732.8" width="122" height="37.4" rx="6" fill="#141414"/>
<rect x="422.7" y="717.1" width="98.6" height="12.4" rx="6.2" fill="#b6b6b6"/>
<rect x="412.8" y="733.9" width="119.8" height="35.2" rx="5" fill="#d3d3d3"/>
<path d="M429.8 734 L424.8 769.6" stroke="#777" stroke-width="0.8" fill="none"/>
<path d="M447.0 734 L442.7 769.6" stroke="#777" stroke-width="0.8" fill="none"/>
<path d="M519.0 734 L514.6 769.6" stroke="#777" stroke-width="0.8" fill="none"/>
<circle cx="472.5" cy="779.9" r="5.9" fill="#b9b9b9"/>
<g transform="translate(207.4,312.2)">
<rect x="0" y="0" width="17" height="12.6" rx="1.5" fill="#f0f0f0" stroke="#a4a4a4" stroke-width="0.9"/>
<rect x="0.6" y="0.6" width="15.8" height="2.4" fill="#cdd1d3"/>
<rect x="4.6" y="8.2" width="25.2" height="20.4" rx="1.5" fill="#e8eeeb" stroke="#74948e" stroke-width="1"/>
<rect x="5.2" y="8.8" width="24" height="3" fill="#c5d1ce"/>
<path d="M6.2 21.8 L28.2 15.2 L28.2 20.6 L6.2 27.2 Z" fill="#74827f"/>
<path d="M7.8 22.5 L12.6 21.1 L12.6 24.7 L7.8 26.1 Z M14.6 20.5 L19.6 19 L19.6 22.6 L14.6 24.1 Z M21.6 18.4 L26.6 16.9 L26.6 20.5 L21.6 22 Z" fill="#e6ece9"/>
<path d="M13.6 4.6 L19.6 4.6 L19.6 10.2 L22.6 10.2 L16.6 17.2 L10.6 10.2 L13.6 10.2 Z" fill="#e01a1a" stroke="#b01010" stroke-width="0.5"/>
</g>
<g transform="translate(438.4,312.2)">
<rect x="0" y="0" width="17" height="12.6" rx="1.5" fill="#f0f0f0" stroke="#a4a4a4" stroke-width="0.9"/>
<rect x="0.6" y="0.6" width="15.8" height="2.4" fill="#cdd1d3"/>
<rect x="4.6" y="8.2" width="25.2" height="20.4" rx="1.5" fill="#e8eeeb" stroke="#74948e" stroke-width="1"/>
<rect x="5.2" y="8.8" width="24" height="3" fill="#c5d1ce"/>
<path d="M6.2 21.8 L28.2 15.2 L28.2 20.6 L6.2 27.2 Z" fill="#74827f"/>
<path d="M7.8 22.5 L12.6 21.1 L12.6 24.7 L7.8 26.1 Z M14.6 20.5 L19.6 19 L19.6 22.6 L14.6 24.1 Z M21.6 18.4 L26.6 16.9 L26.6 20.5 L21.6 22 Z" fill="#e6ece9"/>
<path d="M13.6 4.6 L19.6 4.6 L19.6 10.2 L22.6 10.2 L16.6 17.2 L10.6 10.2 L13.6 10.2 Z" fill="#e01a1a" stroke="#b01010" stroke-width="0.5"/>
</g>
<g transform="translate(699.4,327.5)">
<rect x="0" y="0" width="17" height="12.6" rx="1.5" fill="#f0f0f0" stroke="#a4a4a4" stroke-width="0.9"/>
<rect x="0.6" y="0.6" width="15.8" height="2.4" fill="#cdd1d3"/>
<rect x="4.6" y="8.2" width="25.2" height="20.4" rx="1.5" fill="#e8eeeb" stroke="#74948e" stroke-width="1"/>
<rect x="5.2" y="8.8" width="24" height="3" fill="#c5d1ce"/>
<path d="M6.2 21.8 L28.2 15.2 L28.2 20.6 L6.2 27.2 Z" fill="#74827f"/>
<path d="M7.8 22.5 L12.6 21.1 L12.6 24.7 L7.8 26.1 Z M14.6 20.5 L19.6 19 L19.6 22.6 L14.6 24.1 Z M21.6 18.4 L26.6 16.9 L26.6 20.5 L21.6 22 Z" fill="#e6ece9"/>
<path d="M13.6 4.6 L19.6 4.6 L19.6 10.2 L22.6 10.2 L16.6 17.2 L10.6 10.2 L13.6 10.2 Z" fill="#e01a1a" stroke="#b01010" stroke-width="0.5"/>
</g>
<g transform="translate(354.4,464.5)">
<ellipse cx="11.2" cy="-2.6" rx="3.3" ry="2.4" fill="#e3e6e1" stroke="#8b928a" stroke-width="1"/>
<ellipse cx="11.2" cy="-2.6" rx="1.4" ry="0.9" fill="#aab0a8"/>
<path d="M-13.4 -9.2 C-12 -4 -4.5 1.5 -3.5 5.5 L-3.5 13 C-3.5 14.8 3.5 14.8 3.5 13 L3.5 5.5 C4.5 1.5 12 -4 13.4 -9.2 Z" fill="#d2d7d0" stroke="#8b928a" stroke-width="0.9" stroke-linejoin="round"/>
<path d="M-1.2 5 L-1.2 13.6 C0 14 1 14 1.6 13.6 L1.6 5 C2.4 2 5 -1 7 -3 L-5 -2 C-3 0 -1.6 2.6 -1.2 5 Z" fill="#eef0ec" opacity="0.8"/>
<ellipse cx="0" cy="-9.2" rx="13.4" ry="6.2" fill="#e6e9e3" stroke="#8b928a" stroke-width="0.9"/>
<ellipse cx="-1" cy="-8.6" rx="9.5" ry="4.2" fill="#d3d8d1"/>
</g>
<g transform="translate(488.2,579.3)">
<ellipse cx="11.2" cy="-2.6" rx="3.3" ry="2.4" fill="#e3e6e1" stroke="#8b928a" stroke-width="1"/>
<ellipse cx="11.2" cy="-2.6" rx="1.4" ry="0.9" fill="#aab0a8"/>
<path d="M-13.4 -9.2 C-12 -4 -4.5 1.5 -3.5 5.5 L-3.5 13 C-3.5 14.8 3.5 14.8 3.5 13 L3.5 5.5 C4.5 1.5 12 -4 13.4 -9.2 Z" fill="#d2d7d0" stroke="#8b928a" stroke-width="0.9" stroke-linejoin="round"/>
<path d="M-1.2 5 L-1.2 13.6 C0 14 1 14 1.6 13.6 L1.6 5 C2.4 2 5 -1 7 -3 L-5 -2 C-3 0 -1.6 2.6 -1.2 5 Z" fill="#eef0ec" opacity="0.8"/>
<ellipse cx="0" cy="-9.2" rx="13.4" ry="6.2" fill="#e6e9e3" stroke="#8b928a" stroke-width="0.9"/>
<ellipse cx="-1" cy="-8.6" rx="9.5" ry="4.2" fill="#d3d8d1"/>
</g>
<g transform="translate(839,463.8)">
<path d="M0 -13 L11 -6.8 L11 6.6 L0 13 L-11 6.6 L-11 -6.8 Z" fill="url(#rsG)"/>
<path d="M0 -13 L11 -6.8 L0 -1.5 L-11 -6.8 Z" fill="#f2a0a0" opacity="0.75"/>
<path d="M-11 6.6 L0 1.5 L11 6.6 L0 13 Z" fill="#c04a34" opacity="0.7"/>
</g>
<g transform="translate(473,754.5)">
<path d="M0 -17.8 C4.5 -13 11.2 -6.5 11.2 0 A11.2 11.2 0 0 1 -11.2 0 C-11.2 -6.5 -4.5 -13 0 -17.8 Z" fill="url(#redG)"/>
<path d="M-10.9 -3.4 C-11.6 2 -9.5 8 -3.5 10.7 C3 13 9.5 9 11 2 C11.4 0.5 11.4 -1.2 11 -2.6 C10.6 0.5 8.6 3.4 4.9 2.8 C3.6 5.2 0 6 -2.6 4.4 C-5.4 2.6 -5.4 -2.4 -1.8 -4.9 C-5.5 -6.6 -9 -5.4 -10.9 -3.4 Z" fill="url(#blueG)"/>
<circle cx="0" cy="0" r="4.2" fill="#d6d6d6"/>
</g>
<text x="294.0" y="308.8" font-size="22" fill="#6d6d6d" textLength="54.26" lengthAdjust="spacingAndGlyphs" >Fetch</text>
<text x="294.0" y="336.8" font-size="25.5" fill="#d6d6d6" textLength="40.82" lengthAdjust="spacingAndGlyphs" >SIM</text>
<text x="525.05" y="308.8" font-size="22" fill="#6d6d6d" textLength="54.7" lengthAdjust="spacingAndGlyphs" >Fetch</text>
<text x="525.71" y="336.9" font-size="25.5" fill="#d6d6d6" textLength="64.3" lengthAdjust="spacingAndGlyphs" >MESH</text>
<text x="786.0" y="324.7" font-size="22" fill="#6d6d6d" textLength="55.02" lengthAdjust="spacingAndGlyphs" >Fetch</text>
<text x="786.0" y="351.8" font-size="25.5" fill="#d6d6d6" textLength="187.51" lengthAdjust="spacingAndGlyphs" >RENDER_KARMA</text>
<text x="426.96" y="473.9" font-size="26" fill="#d6d6d6" textLength="85.31" lengthAdjust="spacingAndGlyphs" >merge1</text>
<text x="910.62" y="473.7" font-size="26" fill="#d6d6d6" textLength="169.49" lengthAdjust="spacingAndGlyphs" >Redshift_ROP1</text>
<text x="561.44" y="587.9" font-size="26" fill="#d6d6d6" textLength="84.96" lengthAdjust="spacingAndGlyphs" >merge2</text>
<text x="545.16" y="759.2" font-size="26" fill="#d6d6d6" textLength="212.41" lengthAdjust="spacingAndGlyphs" >drop_and_render1</text>
<path d="M554.5 778 V775.5 C554.5 771 561.5 771 561.5 775.5 V778" stroke="#6c8279" stroke-width="2" fill="none"/>
<rect x="551" y="777.5" width="14.5" height="9.5" rx="1" fill="#6c8279"/>
</svg></body></html>
